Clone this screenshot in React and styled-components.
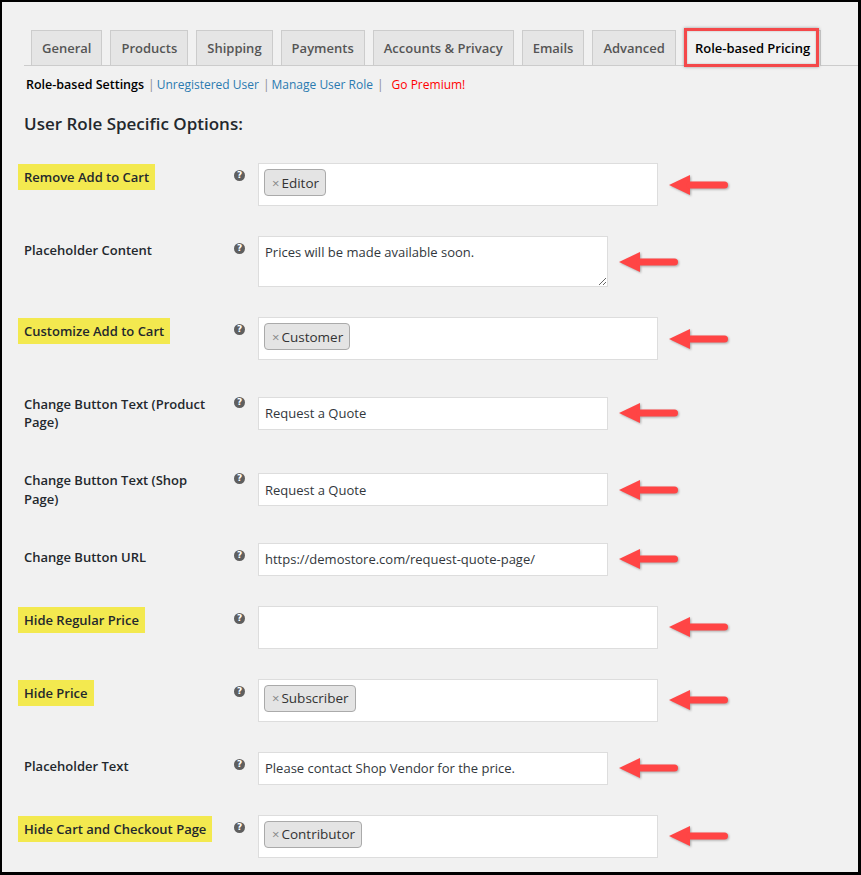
import React from "react";
import styled, { createGlobalStyle } from "styled-components";

const Global = createGlobalStyle`
  html, body { margin: 0; padding: 0; background: #000; }
  body { font-family: "Open Sans", "Noto Sans", Arial, sans-serif; }
  * { box-sizing: border-box; }
`;

const Frame = styled.div`
  width: 861px;
  height: 875px;
  border-style: solid;
  border-color: #000;
  border-width: 2px 3px 3px 2px;
  background: #f1f1f1;
  overflow: hidden;
`;

const Wrap = styled.div`
  padding: 28px 0 0 22px;
  color: #23282d;
`;

const TabBar = styled.nav`
  display: flex;
  align-items: flex-end;
  gap: 8px;
  padding-left: 7px;
  border-bottom: 1px solid #ccc;
`;

const Tab = styled.a`
  position: relative;
  display: block;
  padding: 5px 10px;
  line-height: 24px;
  font-size: 13px;
  font-weight: 600;
  text-decoration: none;
  white-space: nowrap;
  border: 1px solid #ccc;
  border-bottom: none;
  background: ${(p) => (p.$active ? "#f1f1f1" : "#e5e5e5")};
  color: ${(p) => (p.$active ? "#000" : "#555")};
  margin-bottom: ${(p) => (p.$active ? "-1px" : "0")};
  padding-bottom: ${(p) => (p.$active ? "6px" : "5px")};
  &::after {
    content: "";
    display: ${(p) => (p.$active ? "block" : "none")};
    position: absolute;
    left: -1px;
    right: 1px;
    top: -3px;
    bottom: -1px;
    border: 3px solid #f4484a;
    box-shadow: 0 0 3px rgba(0, 0, 0, 0.35), inset 0 0 2px rgba(0, 0, 0, 0.25);
  }
`;

const SubNav = styled.ul`
  display: flex;
  align-items: center;
  list-style: none;
  margin: 6px 0 0;
  padding: 0 0 0 2px;
  font-size: 12px;
  line-height: 26px;
  white-space: nowrap;
`;

const SubItem = styled.li`
  color: #8c8f94;
  margin-right: ${(p) => p.$gap || "0"};
`;

const SubLink = styled.a`
  color: ${(p) => (p.$current ? "#000" : p.$premium ? "#ff0000" : "#2a7ab0")};
  font-weight: ${(p) => (p.$current ? 600 : 400)};
  font-size: ${(p) => (p.$current ? "12.5px" : "12px")};
  text-decoration: none;
  margin: 0 4px 0 ${(p) => (p.$current ? "0" : "2px")};
`;

const Heading = styled.h2`
  margin: 15px 0 13px;
  font-size: 17px;
  line-height: 22px;
  font-weight: 600;
  color: #23282d;
`;

const FormTable = styled.table`
  border-collapse: collapse;
  border-spacing: 0;
`;

const Th = styled.th`
  position: relative;
  width: 224px;
  padding: 20px 24px 20px 0;
  text-align: left;
  vertical-align: top;
  font-size: 13px;
  font-weight: 600;
  line-height: 18.2px;
  color: #23282d;
`;

const Mark = styled.span`
  background: #f3e94f;
  padding: 4px 6px;
  margin-left: -6px;
`;

const Help = styled.span`
  position: absolute;
  top: 22px;
  right: 3px;
  width: 11px;
  height: 11px;
  border-radius: 50%;
  background: #5f5f5f;
  color: #fff;
  font-size: 9px;
  font-weight: 700;
  line-height: 11px;
  text-align: center;
  font-family: "DejaVu Sans", "Open Sans", sans-serif;
`;

const Td = styled.td`
  padding: 15px 10px;
  vertical-align: middle;
`;

const FieldRow = styled.div`
  display: flex;
  align-items: center;
  gap: 10px;
`;

const Select = styled.div`
  width: 400px;
  height: 43px;
  background: #fff;
  border: 1px solid #ddd;
  padding: 5px 0 0 5px;
`;

const Chip = styled.span`
  display: inline-flex;
  align-items: center;
  height: 27px;
  padding: 0 6px 0 7px;
  background: #e4e4e4;
  border: 1px solid #aaa;
  border-radius: 4px;
  font-size: 13.5px;
  color: #333;
`;

const ChipX = styled.span`
  color: #888;
  font-size: 13px;
  margin-right: 2px;
`;

const TextInput = styled.input`
  width: 350px;
  height: 33px;
  border: 1px solid #ddd;
  background: #fff;
  padding: 0 6px;
  font-family: inherit;
  font-size: 13px;
  color: #32373c;
  outline: none;
`;

const TextArea = styled.textarea`
  display: block;
  width: 350px;
  height: 51px;
  border: 1px solid #ddd;
  background: #fff;
  padding: 6px 6px;
  font-family: inherit;
  font-size: 13px;
  line-height: 18px;
  color: #32373c;
  outline: none;
`;

const ArrowSvg = styled.svg`
  flex: none;
  filter: drop-shadow(1px 1px 1px rgba(0, 0, 0, 0.3));
`;

function Arrow() {
  return (
    <ArrowSvg width="62" height="24" viewBox="0 0 62 24">
      <polygon points="1,12 22,2 22,22" fill="#ff4545" />
      <rect x="18" y="8.5" width="42" height="7" rx="3.5" fill="#ff4545" />
    </ArrowSvg>
  );
}

const tabs = [
  "General",
  "Products",
  "Shipping",
  "Payments",
  "Accounts & Privacy",
  "Emails",
  "Advanced",
  "Role-based Pricing",
];

const rows = [
  { label: "Remove Add to Cart", mark: true, type: "select", chip: "Editor" },
  { label: "Placeholder Content", type: "textarea", value: "Prices will be made available soon." },
  { label: "Customize Add to Cart", mark: true, type: "select", chip: "Customer" },
  { label: "Change Button Text (Product Page)", type: "text", value: "Request a Quote" },
  { label: "Change Button Text (Shop Page)", type: "text", value: "Request a Quote" },
  { label: "Change Button URL", type: "text", value: "https://demostore.com/request-quote-page/" },
  { label: "Hide Regular Price", mark: true, type: "select" },
  { label: "Hide Price", mark: true, type: "select", chip: "Subscriber" },
  { label: "Placeholder Text", type: "text", value: "Please contact Shop Vendor for the price." },
  { label: "Hide Cart and Checkout Page", mark: true, type: "select", chip: "Contributor" },
];

function Field({ row }) {
  if (row.type === "select") {
    return (
      <Select>
        {row.chip && (
          <Chip>
            <ChipX>×</ChipX>
            {row.chip}
          </Chip>
        )}
      </Select>
    );
  }
  if (row.type === "textarea") {
    return <TextArea defaultValue={row.value} />;
  }
  return <TextInput type="text" defaultValue={row.value} />;
}

export default function App() {
  return (
    <>
      <Global />
      <Frame>
        <Wrap>
          <TabBar>
            {tabs.map((t) => (
              <Tab key={t} $active={t === "Role-based Pricing"}>
                {t}
              </Tab>
            ))}
          </TabBar>
          <SubNav>
            <SubItem>
              <SubLink $current>Role-based Settings</SubLink>|
            </SubItem>
            <SubItem>
              <SubLink>Unregistered User</SubLink>|
            </SubItem>
            <SubItem $gap="6px">
              <SubLink>Manage User Role</SubLink>|
            </SubItem>
            <SubItem>
              <SubLink $premium>Go Premium!</SubLink>
            </SubItem>
          </SubNav>
          <Heading>User Role Specific Options:</Heading>
          <FormTable>
            <tbody>
              {rows.map((row) => (
                <tr key={row.label}>
                  <Th scope="row">
                    {row.mark ? <Mark>{row.label}</Mark> : row.label}
                    <Help>?</Help>
                  </Th>
                  <Td>
                    <FieldRow>
                      <Field row={row} />
                      <Arrow />
                    </FieldRow>
                  </Td>
                </tr>
              ))}
            </tbody>
          </FormTable>
        </Wrap>
      </Frame>
    </>
  );
}
